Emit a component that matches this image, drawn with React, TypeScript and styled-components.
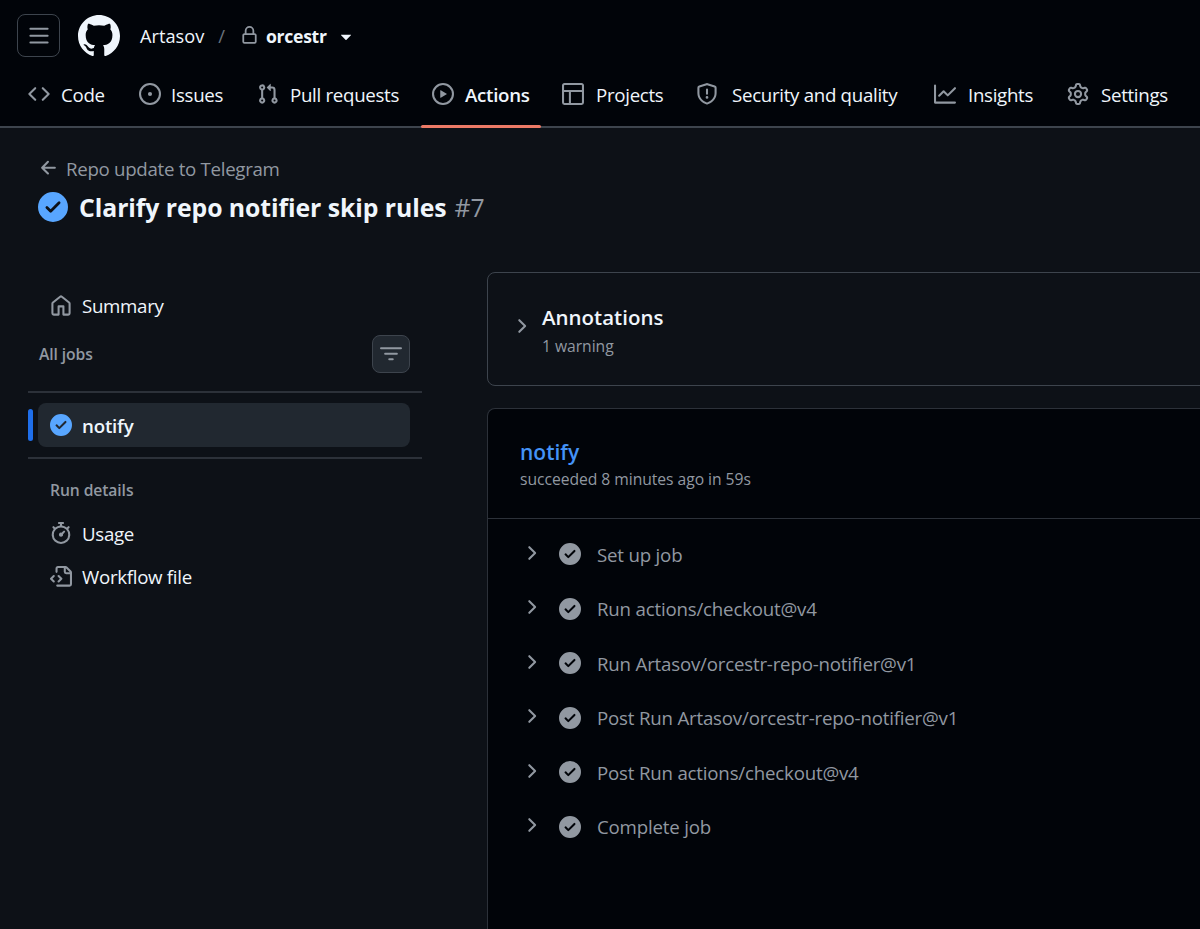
import React from "react";
import styled, { createGlobalStyle } from "styled-components";

const paths = {
  bars: "M1 2.75A.75.75 0 0 1 1.75 2h12.5a.75.75 0 0 1 0 1.5H1.75A.75.75 0 0 1 1 2.75Zm0 5A.75.75 0 0 1 1.75 7h12.5a.75.75 0 0 1 0 1.5H1.75A.75.75 0 0 1 1 7.75ZM1.75 12h12.5a.75.75 0 0 1 0 1.5H1.75a.75.75 0 0 1 0-1.5Z",
  code: "m11.28 3.22 4.25 4.25a.75.75 0 0 1 0 1.06l-4.25 4.25a.749.749 0 0 1-1.275-.326.749.749 0 0 1 .215-.734L13.94 8l-3.72-3.72a.749.749 0 0 1 .326-1.275.749.749 0 0 1 .734.215Zm-6.56 0a.751.751 0 0 1 1.042.018.751.751 0 0 1 .018 1.042L2.06 8l3.72 3.72a.749.749 0 0 1-.326 1.275.749.749 0 0 1-.734-.215L.47 8.53a.75.75 0 0 1 0-1.06Z",
  issue: "M8 9.5a1.5 1.5 0 1 0 0-3 1.5 1.5 0 0 0 0 3ZM8 0a8 8 0 1 1 0 16A8 8 0 0 1 8 0ZM1.5 8a6.5 6.5 0 1 0 13 0 6.5 6.5 0 0 0-13 0Z",
  pull: "M1.5 3.25a2.25 2.25 0 1 1 3 2.122v5.256a2.251 2.251 0 1 1-1.5 0V5.372A2.25 2.25 0 0 1 1.5 3.25Zm5.677-.177L9.573.677A.25.25 0 0 1 10 .854V2.5h1A2.5 2.5 0 0 1 13.5 5v5.628a2.251 2.251 0 1 1-1.5 0V5a1 1 0 0 0-1-1h-1v1.646a.25.25 0 0 1-.427.177L7.177 3.427a.25.25 0 0 1 0-.354ZM3.75 2.5a.75.75 0 1 0 0 1.5.75.75 0 0 0 0-1.5Zm0 9.5a.75.75 0 1 0 0 1.5.75.75 0 0 0 0-1.5Zm8.25.75a.75.75 0 1 0 1.5 0 .75.75 0 0 0-1.5 0Z",
  play: "M8 0a8 8 0 1 1 0 16A8 8 0 0 1 8 0ZM1.5 8a6.5 6.5 0 1 0 13 0 6.5 6.5 0 0 0-13 0Zm4.879-2.773 4.264 2.559a.25.25 0 0 1 0 .428l-4.264 2.559A.25.25 0 0 1 6 10.559V5.442a.25.25 0 0 1 .379-.215Z",
  table: "M0 1.75C0 .784.784 0 1.75 0h12.5C15.216 0 16 .784 16 1.75v12.5A1.75 1.75 0 0 1 14.25 16H1.75A1.75 1.75 0 0 1 0 14.25ZM6.5 6.5v8h7.75a.25.25 0 0 0 .25-.25V6.5Zm8-1.5V1.75a.25.25 0 0 0-.25-.25H1.75a.25.25 0 0 0-.25.25V5Zm-13 1.5v7.75c0 .138.112.25.25.25H5v-8Z",
  shield: "M7.467.133a1.748 1.748 0 0 1 1.066 0l5.25 1.68A1.75 1.75 0 0 1 15 3.48V7c0 1.566-.32 3.182-1.303 4.682-.983 1.498-2.585 2.813-5.032 3.855a1.697 1.697 0 0 1-1.33 0c-2.447-1.042-4.049-2.357-5.032-3.855C1.32 10.182 1 8.566 1 7V3.48a1.75 1.75 0 0 1 1.217-1.667Zm.61 1.429a.25.25 0 0 0-.153 0l-5.25 1.68a.25.25 0 0 0-.174.238V7c0 1.358.275 2.666 1.057 3.86.784 1.194 2.121 2.34 4.366 3.297a.196.196 0 0 0 .154 0c2.245-.956 3.582-2.104 4.366-3.298C13.225 9.666 13.5 8.36 13.5 7V3.48a.251.251 0 0 0-.174-.237l-5.25-1.68ZM8.75 4.75v3a.75.75 0 0 1-1.5 0v-3a.75.75 0 0 1 1.5 0ZM9 10.5a1 1 0 1 1-2 0 1 1 0 0 1 2 0Z",
  graph: "M1.5 1.75V13.5h13.75a.75.75 0 0 1 0 1.5H.75a.75.75 0 0 1-.75-.75V1.75a.75.75 0 0 1 1.5 0Zm14.28 2.53-5.25 5.25a.75.75 0 0 1-1.06 0L7 7.06 4.28 9.78a.751.751 0 0 1-1.042-.018.751.751 0 0 1-.018-1.042l3.25-3.25a.75.75 0 0 1 1.06 0L10 7.94l4.72-4.72a.751.751 0 0 1 1.042.018.751.751 0 0 1 .018 1.042Z",
  gear: "M8 0a8.2 8.2 0 0 1 .701.031C9.444.095 9.99.645 10.16 1.29l.288 1.107c.018.066.079.158.212.224.231.114.454.243.668.386.123.082.233.09.299.071l1.103-.303c.644-.176 1.392.021 1.82.63.27.385.506.792.704 1.218.315.675.111 1.422-.364 1.891l-.814.806c-.049.048-.098.147-.088.294.016.257.016.515 0 .772-.01.147.038.246.088.294l.814.806c.475.469.679 1.216.364 1.891a7.977 7.977 0 0 1-.704 1.217c-.428.61-1.176.807-1.82.63l-1.102-.302c-.067-.019-.177-.011-.3.071a5.909 5.909 0 0 1-.668.386c-.133.066-.194.158-.211.224l-.29 1.106c-.168.646-.715 1.196-1.458 1.26a8.006 8.006 0 0 1-1.402 0c-.743-.064-1.289-.614-1.458-1.26l-.289-1.106c-.018-.066-.079-.158-.212-.224a5.738 5.738 0 0 1-.668-.386c-.123-.082-.233-.09-.299-.071l-1.103.303c-.644.176-1.392-.021-1.82-.63a8.12 8.12 0 0 1-.704-1.218c-.315-.675-.111-1.422.363-1.891l.815-.806c.05-.048.098-.147.088-.294a6.214 6.214 0 0 1 0-.772c.01-.147-.038-.246-.088-.294l-.815-.806C.635 6.045.431 5.298.746 4.623a7.92 7.92 0 0 1 .704-1.217c.428-.61 1.176-.807 1.82-.63l1.102.302c.067.019.177.011.3-.071.214-.143.437-.272.668-.386.133-.066.194-.158.211-.224l.29-1.106C6.009.645 6.556.095 7.299.03 7.53.01 7.764 0 8 0Zm-.571 1.525c-.036.003-.108.036-.137.146l-.289 1.105c-.147.561-.549.967-.998 1.189-.173.086-.34.183-.5.29-.417.278-.97.423-1.529.27l-1.103-.303c-.109-.03-.175.016-.195.045-.22.312-.412.644-.573.99-.014.031-.021.11.059.19l.815.806c.411.406.562.957.53 1.456a4.709 4.709 0 0 0 0 .582c.032.499-.119 1.05-.53 1.456l-.815.806c-.081.08-.073.159-.059.19.162.346.353.677.573.989.02.03.085.076.195.046l1.102-.303c.56-.153 1.113-.008 1.53.27.161.107.328.204.501.29.447.222.85.629.997 1.189l.289 1.105c.029.109.101.143.137.146a6.6 6.6 0 0 0 1.142 0c.036-.003.108-.036.137-.146l.289-1.105c.147-.561.549-.967.998-1.189.173-.086.34-.183.5-.29.417-.278.97-.423 1.529-.27l1.103.303c.109.029.175-.016.195-.045.22-.313.411-.644.573-.99.014-.031.021-.11-.059-.19l-.815-.806c-.411-.406-.562-.957-.53-1.456a4.709 4.709 0 0 0 0-.582c-.032-.499.119-1.05.53-1.456l.815-.806c.081-.08.073-.159.059-.19a6.464 6.464 0 0 0-.573-.989c-.02-.03-.085-.076-.195-.046l-1.102.303c-.56.153-1.113.008-1.53-.27a4.44 4.44 0 0 0-.501-.29c-.447-.222-.85-.629-.997-1.189l-.289-1.105c-.029-.11-.101-.143-.137-.146a6.6 6.6 0 0 0-1.142 0ZM11 8a3 3 0 1 1-6 0 3 3 0 0 1 6 0ZM9.5 8a1.5 1.5 0 1 0-3.001.001A1.5 1.5 0 0 0 9.5 8Z",
  home: "M6.906.664a1.749 1.749 0 0 1 2.187 0l5.25 4.2c.415.332.657.835.657 1.367v7.019A1.75 1.75 0 0 1 13.25 15h-3.5a.75.75 0 0 1-.75-.75V9H7v5.25a.75.75 0 0 1-.75.75h-3.5A1.75 1.75 0 0 1 1 13.25V6.23c0-.531.242-1.034.657-1.366l5.25-4.2Zm1.25 1.171a.25.25 0 0 0-.312 0l-5.25 4.2a.25.25 0 0 0-.094.196v7.019c0 .138.112.25.25.25H5.5V8.25a.75.75 0 0 1 .75-.75h3.5a.75.75 0 0 1 .75.75v5.25h2.75a.25.25 0 0 0 .25-.25V6.23a.25.25 0 0 0-.094-.195Z",
  filter: "M.75 3h14.5a.75.75 0 0 1 0 1.5H.75a.75.75 0 0 1 0-1.5ZM3 7.75A.75.75 0 0 1 3.75 7h8.5a.75.75 0 0 1 0 1.5h-8.5A.75.75 0 0 1 3 7.75Zm3 4a.75.75 0 0 1 .75-.75h2.5a.75.75 0 0 1 0 1.5h-2.5a.75.75 0 0 1-.75-.75Z",
  stopwatch: "M5.75.75A.75.75 0 0 1 6.5 0h3a.75.75 0 0 1 0 1.5h-.75v1l-.001.041a6.724 6.724 0 0 1 3.464 1.435l.007-.006.75-.75a.75.75 0 1 1 1.06 1.06l-.75.75-.006.007a6.75 6.75 0 1 1-10.548 0L2.72 5.03l-.75-.75a.751.751 0 0 1 .018-1.042.751.751 0 0 1 1.042-.018l.75.75.007.006A6.72 6.72 0 0 1 7.25 2.541V1.5H6.5a.75.75 0 0 1-.75-.75ZM8 14.5a5.25 5.25 0 1 0-.001-10.501A5.25 5.25 0 0 0 8 14.5Zm.389-6.7 1.33-1.33a.75.75 0 1 1 1.061 1.06L9.45 8.861A1.503 1.503 0 0 1 8 10.75a1.499 1.499 0 1 1 .389-2.95Z",
  fileCode: "M4 1.75C4 .784 4.784 0 5.75 0h5.586c.464 0 .909.184 1.237.513l2.914 2.914c.329.328.513.773.513 1.237v8.586A1.75 1.75 0 0 1 14.25 15h-9a.75.75 0 0 1 0-1.5h9a.25.25 0 0 0 .25-.25V6h-2.75A1.75 1.75 0 0 1 10 4.25V1.5H5.75a.25.25 0 0 0-.25.25v2.5a.75.75 0 0 1-1.5 0Zm1.72 4.97a.75.75 0 0 1 1.06 0l2 2a.75.75 0 0 1 0 1.06l-2 2a.749.749 0 0 1-1.275-.326.749.749 0 0 1 .215-.734l1.47-1.47-1.47-1.47a.75.75 0 0 1 0-1.06ZM3.28 7.78 1.81 9.25l1.47 1.47a.751.751 0 0 1-.018 1.042.751.751 0 0 1-1.042.018l-2-2a.75.75 0 0 1 0-1.06l2-2a.751.751 0 0 1 1.042.018.751.751 0 0 1 .018 1.042Zm8.22-6.218V4.25c0 .138.112.25.25.25h2.688l-.011-.013-2.914-2.914-.013-.011Z",
  check: "M8 16A8 8 0 1 1 8 0a8 8 0 0 1 0 16Zm3.78-9.72a.751.751 0 0 0-.018-1.042.751.751 0 0 0-1.042-.018L6.75 9.19 5.28 7.72a.751.751 0 0 0-1.042.018.751.751 0 0 0-.018 1.042l2 2a.75.75 0 0 0 1.06 0Z",
  chevron: "M6.22 3.22a.75.75 0 0 1 1.06 0l4.25 4.25a.75.75 0 0 1 0 1.06l-4.25 4.25a.751.751 0 0 1-1.042-.018.751.751 0 0 1-.018-1.042L9.94 8 6.22 4.28a.75.75 0 0 1 0-1.06Z",
  arrow: "M7.78 12.53a.75.75 0 0 1-1.06 0L2.47 8.28a.75.75 0 0 1 0-1.06l4.25-4.25a.751.751 0 0 1 1.042.018.751.751 0 0 1 .018 1.042L4.81 7h7.44a.75.75 0 0 1 0 1.5H4.81l2.97 2.97a.75.75 0 0 1 0 1.06Z",
  lock: "M4 4a4 4 0 0 1 8 0v2h.25c.966 0 1.75.784 1.75 1.75v5.5A1.75 1.75 0 0 1 12.25 15h-8.5A1.75 1.75 0 0 1 2 13.25v-5.5C2 6.784 2.784 6 3.75 6H4Zm8.25 3.5h-8.5a.25.25 0 0 0-.25.25v5.5c0 .138.112.25.25.25h8.5a.25.25 0 0 0 .25-.25v-5.5a.25.25 0 0 0-.25-.25ZM10.5 6V4a2.5 2.5 0 1 0-5 0v2Z",
  caret: "m4.427 7.427 3.396 3.396a.25.25 0 0 0 .354 0l3.396-3.396A.25.25 0 0 0 11.396 7H4.604a.25.25 0 0 0-.177.427Z",
};
type IconName = keyof typeof paths;

const Svg = styled.svg`flex: none; fill: currentColor; display: block;`;
const Icon = ({ name, size = 22 }: { name: IconName; size?: number }) => (
  <Svg width={size} height={size} viewBox="0 0 16 16"><path fillRule="evenodd" d={paths[name]} /></Svg>
);

const Global = createGlobalStyle`
  html, body { margin: 0; padding: 0; background: #0d1117; }
  body { font-family: "Open Sans", "Noto Sans", "Liberation Sans", sans-serif; color: #f0f6fc; }
`;
const Page = styled.div`width: 1200px; height: 929px; overflow: hidden; display: flex; flex-direction: column; background: #0d1117;`;
const Header = styled.header`flex: none; height: 128px; box-sizing: border-box; background: #010409; border-bottom: 2px solid #3d444d; display: flex; flex-direction: column;`;
const TopRow = styled.div`height: 71px; flex: none; display: flex; align-items: center; padding-left: 17px; color: #f0f6fc;`;
const MenuButton = styled.div`width: 43px; height: 43px; box-sizing: border-box; border: 1px solid #3d444d; border-radius: 8px; display: flex; align-items: center; justify-content: center; color: #9198a1;`;
const Logo = styled.svg`margin-left: 18px; flex: none; fill: #f0f6fc;`;
const Owner = styled.span`margin-left: 20px; font-size: 18.2px;`;
const Slash = styled.span`margin: 0 15px 0 14px; font-size: 18.5px; color: #6b737d;`;
const LockWrap = styled.span`display: flex; color: #9198a1; margin-right: 7px;`;
const Repo = styled.span`font-size: 17.6px; font-weight: 700; letter-spacing: -0.3px;`;
const Caret = styled.span`display: flex; margin-left: 8px; color: #f0f6fc;`;
const Nav = styled.nav`flex: 1; display: flex; gap: 10px; padding-left: 17px;`;
const Tab = styled.div<{ $active?: boolean; $w: number; $gap: number }>`
  position: relative; width: ${(p) => p.$w}px; flex: none; box-sizing: border-box; padding: 0 0 9px 11px;
  display: flex; align-items: center; gap: ${(p) => p.$gap}px; font-size: 18.7px; letter-spacing: -0.3px; white-space: nowrap;
  font-weight: ${(p) => (p.$active ? 600 : 400)};
  color: #f0f6fc;
  svg { color: #9198a1; }
  ${(p) => p.$active && `&::after { content: ""; position: absolute; left: 0; right: 0; bottom: -2px; height: 3px; background: #ec7a66; border-radius: 2px; }`}
`;
const Body = styled.div`flex: 1; min-height: 0; display: flex; flex-direction: column;`;
const TitleBlock = styled.div`padding: 27px 0 0 38px; height: 117px; box-sizing: border-box; flex: none;`;
const Back = styled.div`display: flex; align-items: center; gap: 6px; height: 26px; color: #9198a1; font-size: 18.7px; letter-spacing: -0.3px;`;
const TitleRow = styled.div`display: flex; align-items: center; gap: 11px; margin-top: 6px; height: 40px;`;
const TitleIcon = styled.span`display: flex; color: #58a6ff;`;
const Title = styled.h1`margin: 0; font-size: 24.8px; font-weight: 700; letter-spacing: -0.07px; color: #f0f6fc;`;
const RunNo = styled.span`font-weight: 400; color: #9198a1; margin-left: 8px; letter-spacing: 0;`;
const Columns = styled.div`flex: 1; min-height: 0; display: flex;`;
const Sidebar = styled.aside`flex: none; width: 394px; margin-left: 28px; padding-top: 39px;`;
const SideLink = styled.div<{ $mt?: number }>`display: flex; align-items: center; gap: 10px; height: 43.5px; padding-left: 22px; font-size: 18.7px; letter-spacing: -0.3px; color: #f0f6fc; margin-top: ${(p) => p.$mt ?? 0}px; svg { color: #9198a1; }`;
const SideHead = styled.div`display: flex; align-items: center; justify-content: space-between; height: 38px; margin-top: 7px; padding: 0 12px 0 11px;`;
const SideLabel = styled.span`font-size: 15.7px; font-weight: 600; letter-spacing: -0.1px; color: #9198a1;`;
const FilterButton = styled.div`width: 38px; height: 38px; box-sizing: border-box; border: 1px solid #3d444d; border-radius: 8px; background: #212830; color: #9198a1; display: flex; align-items: center; justify-content: center;`;
const Rule = styled.div<{ $mt?: number }>`height: 2px; background: #2c3139; margin-top: ${(p) => p.$mt ?? 0}px;`;
const JobRow = styled.div`position: relative; margin: 10px 12px 10px 10px; height: 44px; box-sizing: border-box; padding: 1px 0 0 12px; border-radius: 8px; background: #212830; display: flex; align-items: center; gap: 10px; font-size: 18.7px; letter-spacing: -0.2px; font-weight: 600; color: #58a6ff;
  &::before { content: ""; position: absolute; left: -10px; top: 6px; width: 5px; height: 32px; border-radius: 3px; background: #1f6feb; }`;
const JobName = styled.span`color: #f0f6fc;`;
const RunLabel = styled.div`margin-top: 20px; padding-left: 22px; height: 22px; display: flex; align-items: center;`;
const Main = styled.main`flex: none; width: 800px; margin-left: 65px; padding-top: 27px; display: flex; flex-direction: column;`;
const Annotations = styled.section`flex: none; height: 114px; box-sizing: border-box; border: 1px solid #3d444d; border-radius: 8px; display: flex; align-items: center; padding-left: 22px; gap: 10px;`;
const Chevron = styled.span`display: flex; color: #9198a1;`;
const AnnChevron = styled(Chevron)`margin-bottom: 6px;`;
const StepChevron = styled(Chevron)`margin-bottom: 3px;`;
const AnnText = styled.div`padding-top: 1px;`;
const AnnTitle = styled.div`font-size: 20.5px; font-weight: 600; line-height: 30px; margin-bottom: 2px; color: #f0f6fc;`;
const MutedLine = styled.div`font-size: 15.7px; line-height: 24px; letter-spacing: -0.05px; color: #9198a1;`;
const Job = styled.section`flex: 1; margin-top: 22px; background: #010409; border: 1px solid #2c3139; border-bottom: 0; border-radius: 8px 8px 0 0;`;
const JobHead = styled.div`height: 110px; box-sizing: border-box; padding: 28px 0 0 32px; border-bottom: 1px solid #2c3139;`;
const JobLink = styled.div`font-size: 21px; font-weight: 600; line-height: 30px; color: #4493f8;`;
const Steps = styled.div`padding-top: 8px;`;
const Step = styled.div`height: 54.5px; display: flex; align-items: center; padding-left: 32px; color: #9198a1; font-size: 18.7px; letter-spacing: -0.2px; white-space: nowrap;`;
const StepIcon = styled.span`display: flex; margin-left: 17px; margin-right: 16px;`;

const tabs: [IconName, string, number, number, boolean?][] = [
  ["code", "Code", 101, 11], ["issue", "Issues", 108, 10], ["pull", "Pull requests", 165, 11],
  ["play", "Actions", 120, 11, true], ["table", "Projects", 124, 12], ["shield", "Security and quality", 228, 14],
  ["graph", "Insights", 123, 12], ["gear", "Settings", 123, 12],
];
const steps = ["Set up job", "Run actions/checkout@v4", "Run Artasov/orcestr-repo-notifier@v1", "Post Run Artasov/orcestr-repo-notifier@v1", "Post Run actions/checkout@v4", "Complete job"];

export default function App() {
  return (
    <Page>
      <Global />
      <Header>
        <TopRow>
          <MenuButton><Icon name="bars" /></MenuButton>
          <Logo width="42" height="42" viewBox="1 1 22 22"><path d="M12 1C5.923 1 1 5.923 1 12c0 4.867 3.149 8.979 7.521 10.436.55.096.756-.233.756-.522 0-.262-.013-1.128-.013-2.049-2.764.509-3.479-.674-3.699-1.292-.124-.317-.66-1.293-1.127-1.554-.385-.207-.936-.715-.014-.729.866-.014 1.485.797 1.691 1.128.99 1.663 2.571 1.196 3.204.907.096-.715.385-1.196.701-1.471-2.448-.275-5.005-1.224-5.005-5.432 0-1.196.426-2.186 1.128-2.956-.111-.275-.496-1.402.11-2.915 0 0 .921-.288 3.024 1.128a10.193 10.193 0 0 1 2.75-.371c.936 0 1.871.123 2.75.371 2.104-1.43 3.025-1.128 3.025-1.128.605 1.513.221 2.64.111 2.915.701.77 1.127 1.747 1.127 2.956 0 4.222-2.571 5.157-5.019 5.432.399.344.743 1.004.743 2.035 0 1.471-.014 2.654-.014 3.025 0 .289.206.632.756.522C19.851 20.979 23 16.854 23 12c0-6.077-4.922-11-11-11Z" /></Logo>
          <Owner>Artasov</Owner>
          <Slash>/</Slash>
          <LockWrap><Icon name="lock" size={19} /></LockWrap>
          <Repo>orcestr</Repo>
          <Caret><Icon name="caret" /></Caret>
        </TopRow>
        <Nav>
          {tabs.map(([name, label, w, gap, active]) => (
            <Tab key={label} $w={w} $gap={gap} $active={active}><Icon name={name} />{label}</Tab>
          ))}
        </Nav>
      </Header>
      <Body>
        <TitleBlock>
          <Back><Icon name="arrow" />Repo update to Telegram</Back>
          <TitleRow>
            <TitleIcon><Icon name="check" size={30} /></TitleIcon>
            <Title>Clarify repo notifier skip rules<RunNo>#7</RunNo></Title>
          </TitleRow>
        </TitleBlock>
        <Columns>
          <Sidebar>
            <SideLink><Icon name="home" />Summary</SideLink>
            <SideHead><SideLabel>All jobs</SideLabel><FilterButton><Icon name="filter" /></FilterButton></SideHead>
            <Rule $mt={18} />
            <JobRow><Icon name="check" /><JobName>notify</JobName></JobRow>
            <Rule />
            <RunLabel><SideLabel>Run details</SideLabel></RunLabel>
            <SideLink $mt={11}><Icon name="stopwatch" />Usage</SideLink>
            <SideLink><Icon name="fileCode" />Workflow file</SideLink>
          </Sidebar>
          <Main>
            <Annotations>
              <AnnChevron><Icon name="chevron" /></AnnChevron>
              <AnnText><AnnTitle>Annotations</AnnTitle><MutedLine>1 warning</MutedLine></AnnText>
            </Annotations>
            <Job>
              <JobHead><JobLink>notify</JobLink><MutedLine>succeeded 8 minutes ago in 59s</MutedLine></JobHead>
              <Steps>
                {steps.map((s) => (
                  <Step key={s}>
                    <StepChevron><Icon name="chevron" /></StepChevron>
                    <StepIcon><Icon name="check" /></StepIcon>
                    {s}
                  </Step>
                ))}
              </Steps>
            </Job>
          </Main>
        </Columns>
      </Body>
    </Page>
  );
}
